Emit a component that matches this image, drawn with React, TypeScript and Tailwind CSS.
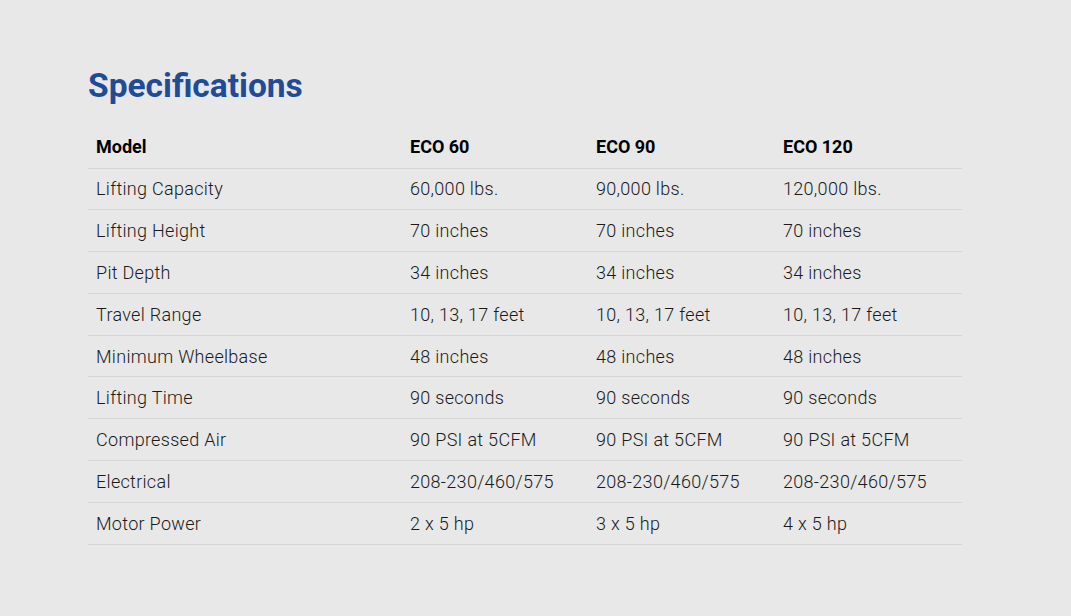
const rows: [string, string, string, string][] = [
  ['Lifting Capacity', '60,000 lbs.', '90,000 lbs.', '120,000 lbs.'],
  ['Lifting Height', '70 inches', '70 inches', '70 inches'],
  ['Pit Depth', '34 inches', '34 inches', '34 inches'],
  ['Travel Range', '10, 13, 17 feet', '10, 13, 17 feet', '10, 13, 17 feet'],
  ['Minimum Wheelbase', '48 inches', '48 inches', '48 inches'],
  ['Lifting Time', '90 seconds', '90 seconds', '90 seconds'],
  ['Compressed Air', '90 PSI at 5CFM', '90 PSI at 5CFM', '90 PSI at 5CFM'],
  ['Electrical', '208-230/460/575', '208-230/460/575', '208-230/460/575'],
  ['Motor Power', '2 x 5 hp', '3 x 5 hp', '4 x 5 hp'],
];

const App = () => {
  return (
    <div className="min-h-screen bg-[#e8e8e8] font-['Roboto',sans-serif] text-[#222]">
      <div className="pt-[65px] pl-[88px] w-[962px]">
        <h2 className="text-[33.5px] leading-[42px] font-bold text-[#1e4c98] mb-[19px]">Specifications</h2>
        <table className="w-[874px] table-fixed border-collapse text-[18px] tracking-[0.3px]">
          <colgroup>
            <col className="w-[314px]" />
            <col className="w-[186px]" />
            <col className="w-[187px]" />
            <col className="w-[187px]" />
          </colgroup>
          <thead>
            <tr className="h-[42px] border-b border-[#d6d6d6]">
              <th className="text-left font-bold px-2 text-black tracking-normal">Model</th>
              <th className="text-left font-bold px-2 text-black tracking-normal">ECO 60</th>
              <th className="text-left font-bold px-2 text-black tracking-normal">ECO 90</th>
              <th className="text-left font-bold px-2 text-black tracking-normal">ECO 120</th>
            </tr>
          </thead>
          <tbody>
            {rows.map((r) => (
              <tr key={r[0]} className="h-[41.8px] border-b border-[#d6d6d6]">
                {r.map((c, i) => (
                  <td key={i} className="px-2 font-light text-[#1a1a1a]">{c}</td>
                ))}
              </tr>
            ))}
          </tbody>
        </table>
      </div>
    </div>
  );
};

export default App;
